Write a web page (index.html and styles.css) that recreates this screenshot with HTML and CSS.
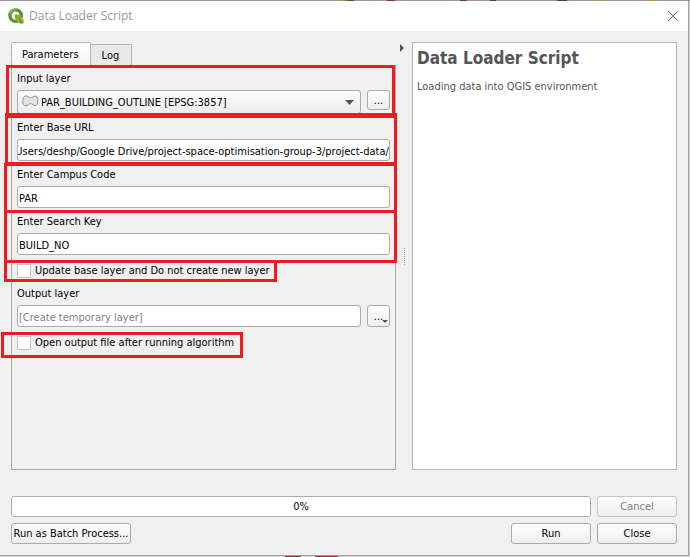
FILE: index.html
```html
<!DOCTYPE html>
<html lang="en">
<head>
<meta charset="utf-8">
<title>Data Loader Script</title>
<link rel="stylesheet" href="styles.css">
</head>
<body>
<div class="backdrop backdrop-top" aria-hidden="true">
  <svg width="690" height="1" shape-rendering="crispEdges">
    <path d="M342 0h4v1h-4z" fill="#a8901c"/><path d="M346 0h3v1h-3z" fill="#2c8058"/><path d="M349 0h5v1h-5z" fill="#9a2c30"/>
    <path d="M387 0h8v1h-8zM460 0h7v1h-7z" fill="#843038"/><path d="M490 0h6v1h-6zM557 0h10v1h-10z" fill="#3c4654"/>
    <path d="M590 0h4v1h-4zM597 0h4v1h-4zM650 0h7v1h-7z" fill="#b89a20"/>
  </svg>
</div>
<main class="dialog">
  <header class="titlebar">
    <svg class="logo" width="16" height="16" viewBox="0 0 16 16">
      <circle cx="7.6" cy="7.6" r="5.7" fill="none" stroke="#589632" stroke-width="3.4"/>
      <path d="M2.2 5.6A5.8 5.8 0 0 1 7.6 1.8" fill="none" stroke="#8cba3c" stroke-width="1.6"/>
      <path d="M8 8l7 7" stroke="#fff" stroke-width="5"/>
      <path d="M7 7h4l4.600 4.800V15.500H12.200L7 10.500z" fill="#93b023"/>
      <path d="M6.500 6.500h4L9 8.500 7 10.300z" fill="#ee7913"/>
      <path d="M10.500 10.500l4.500 4.700h-3z" fill="#589632"/>
    </svg>
    <h1 class="title">Data Loader Script</h1>
    <button class="close" type="button" aria-label="Close window">
      <svg width="12" height="12" viewBox="0 0 12 12"><path d="M1 1l10 10M11 1L1 11" stroke="#777" stroke-width="1" fill="none"/></svg>
    </button>
  </header>
  <form class="body">
    <div class="columns">
      <section class="left">
        <div class="tabs" role="tablist">
          <button class="tab tab-active" type="button" role="tab" aria-selected="true">Parameters</button>
          <button class="tab" type="button" role="tab" aria-selected="false">Log</button>
        </div>
        <div class="panel" role="tabpanel">
          <div class="field mark mark-layer">
            <label for="input-layer">Input layer</label>
            <div class="row">
              <div class="combo">
                <svg class="polygon" width="17" height="12" viewBox="0 0 17 12"><path d="M3.500 1C5.500.5 6.500 2.600 8.500 2.600S11.500 1 13.500 1.200C16 1.500 16 4 15.800 6c-.2 3-1 4.500-2.800 4.500-2 0-2.500-1.800-4.500-1.800S6 10.800 3.800 10.800C1.500 10.800.8 9 .8 6 .8 3.500 1.300 1.400 3.500 1z" fill="#e2e2e2" stroke="#929292"/></svg>
                <select id="input-layer"><option>PAR_BUILDING_OUTLINE [EPSG:3857]</option></select>
                <svg class="arrow" width="9" height="5" viewBox="0 0 9 5"><path d="M0 0h9L4.500 5z" fill="#555"/></svg>
              </div>
              <button class="button browse browse-short" type="button" aria-label="Browse input layer">...</button>
            </div>
          </div>
          <div class="field mark mark-url">
            <label for="base-url">Enter Base URL</label>
            <input class="text text-scrolled" id="base-url" type="text" value="/Users/deshp/Google Drive/project-space-optimisation-group-3/project-data/">
          </div>
          <div class="field mark mark-campus">
            <label for="campus">Enter Campus Code</label>
            <input class="text" id="campus" type="text" value="PAR">
          </div>
          <div class="field mark mark-key">
            <label for="search-key">Enter Search Key</label>
            <input class="text" id="search-key" type="text" value="BUILD_NO">
          </div>
          <div class="check mark mark-update">
            <input id="update" type="checkbox"><label for="update">Update base layer and Do not create new layer</label>
          </div>
          <div class="field">
            <label for="output">Output layer</label>
            <div class="row">
              <input class="text" id="output" type="text" placeholder="[Create temporary layer]">
              <button class="button browse" type="button" aria-label="Choose output">...<svg class="menu-arrow" width="6" height="3" viewBox="0 0 6 3"><path d="M0 0h6L3 3z" fill="#555"/></svg></button>
            </div>
          </div>
          <div class="check mark mark-open">
            <input id="open" type="checkbox"><label for="open">Open output file after running algorithm</label>
          </div>
        </div>
      </section>
      <div class="splitter">
        <svg class="collapse" width="4" height="8" viewBox="0 0 4 8"><path d="M0 0v8l4-4z" fill="#555"/></svg>
        <span class="grip"></span>
      </div>
      <section class="help">
        <h2>Data Loader Script</h2>
        <p>Loading data into QGIS environment</p>
      </section>
    </div>
    <footer class="footer">
      <div class="row">
        <div class="progress">
          <progress id="progress" value="0" max="100"></progress>
          <label for="progress">0%</label>
        </div>
        <button class="button action" type="button" disabled>Cancel</button>
      </div>
      <div class="row">
        <button class="button batch" type="button">Run as Batch Process...</button>
        <button class="button action" type="button">Run</button>
        <button class="button action" type="button">Close</button>
      </div>
    </footer>
  </form>
</main>
<div class="backdrop" aria-hidden="true">
  <svg width="690" height="1" shape-rendering="crispEdges"><path d="M285 0h16v1h-16zM315 0h23v1h-23z" fill="#a03034"/></svg>
</div>
<script src="main.js"></script>
</body>
</html>
```
FILE: main.js
```js
// Long paths show their end, as after typing.
const url = document.getElementById("base-url");
url.scrollLeft = url.scrollWidth;
```
FILE: styles.css
```css
*, *::after { box-sizing: border-box; }

body {
  margin: 0;
  min-height: 100vh;
  display: flex;
  flex-direction: column;
  background: #d4d4d4;
  color: #000;
  font: 11px/16px "DejaVu Sans Condensed", "Noto Sans", sans-serif;
}

button, input, select { font: inherit; color: inherit; margin: 0; }

.backdrop { height: 1px; overflow: hidden; }
.backdrop svg { display: block; }
.backdrop-top { background: #999; }

.dialog {
  flex: 1;
  display: flex;
  flex-direction: column;
  margin-right: 1px;
  border-right: 1px solid #a0a0a0;
  border-bottom: 1px solid #a0a0a0;
  background: #f0f0f0;
}

.titlebar {
  display: flex;
  align-items: center;
  gap: 5px;
  height: 30px;
  padding: 0 9px 0 8px;
  background: #fff;
}
.title {
  flex: 1;
  margin: 0;
  font: 12px/16px "Open Sans", "Noto Sans", sans-serif;
  color: #999;
}
.close { display: flex; padding: 0; border: 0; background: none; }

.body {
  flex: 1;
  display: flex;
  flex-direction: column;
  gap: 26px;
  padding: 11px;
}
.columns {
  flex: 1;
  display: grid;
  grid-template-columns: minmax(0, 385fr) 16px minmax(0, 265fr);
}

.left { display: flex; flex-direction: column; }
.tabs { display: flex; align-items: flex-end; }
.tab {
  height: 21px;
  padding: 2px 12px 0 11px;
  border: 1px solid #b4b4b4;
  border-left: 0;
  border-bottom: 0;
  border-radius: 0 2px 0 0;
  background: #e9e9e9;
}
.tab-active {
  height: 23px;
  padding: 2px 11px 0 10px;
  border-left: 1px solid #b4b4b4;
  border-radius: 2px 2px 0 0;
  background: linear-gradient(#fff, #f4f4f4);
}

.panel {
  flex: 1;
  display: flex;
  flex-direction: column;
  gap: 6px;
  padding: 5px;
  border: 1px solid #a9a9a9;
}
.field { display: flex; flex-direction: column; gap: 3px; }
.row { display: flex; gap: 6px; }

.text {
  flex: 1 0 auto;
  min-width: 0;
  width: 100%;
  height: 22px;
  padding: 2px 1px 0;
  border: 1px solid #ababab;
  border-radius: 3px;
  background: #fff;
}
.row .text { flex: 1; width: 0; }
.text-scrolled { padding: 2px 0 0; }
.text::placeholder { color: #808080; opacity: 1; }

.combo { position: relative; flex: 1; display: flex; }
.combo select {
  width: 100%;
  height: 24px;
  padding: 2px 20px 0 23px;
  appearance: none;
  border: 1px solid #ababab;
  border-radius: 3px;
  background: linear-gradient(#fdfdfd, #ececec);
}
.polygon { position: absolute; left: 5px; top: 5px; }
.arrow { position: absolute; right: 7px; top: 10px; }

.button {
  position: relative;
  height: 21px;
  padding: 0;
  border: 1px solid #ababab;
  border-radius: 3px;
  background: linear-gradient(#fff, #ededed);
  white-space: nowrap;
}
.button:disabled { color: #808080; border-color: #c4c4c4; }
.browse { width: 23px; height: 22px; padding-top: 2px; }
.browse-short { height: 20px; }
.menu-arrow { position: absolute; right: 1px; bottom: 3px; }
.action { width: 80px; }
.batch { width: 120px; margin-right: auto; }

.check { display: flex; align-items: center; gap: 4px; height: 19px; }
.check input {
  appearance: none;
  width: 14px;
  height: 14px;
  border: 1px solid #c4c4c4;
  background: #fff;
}

/* Red highlight frames drawn over the form */
.mark { position: relative; }
.mark::after {
  content: "";
  position: absolute;
  z-index: 1;
  border: 3px solid #ed1c24;
  pointer-events: none;
}
.mark-layer::after { inset: -6px -5px -3px -11px; }
.mark-url::after { inset: -7px -7px -5px -12px; border-top-width: 5px; border-bottom-width: 4px; }
.mark-campus::after { inset: -4px -7px -5px -13px; }
.mark-key::after { inset: -4px -7px -8px -13px; }
.mark-update::after { top: -1px; bottom: -2px; left: -13px; width: 273px; }
.mark-open::after { top: -1px; bottom: -6px; left: -16px; width: 242px; }

.splitter {
  position: relative;
  display: flex;
  align-items: center;
  justify-content: center;
}
.collapse { position: absolute; left: 4px; top: 2px; }
.grip { height: 17px; border-left: 1px dotted #a0a0a0; }

.help {
  padding: 4px;
  border: 1px solid #b4b4b4;
  background: #fff;
  color: #555;
}
.help h2 { margin: 0 0 10px; font: bold 17px/22px "DejaVu Sans Condensed", "Noto Sans", sans-serif; }
.help p { margin: 0; }

.footer { display: flex; flex-direction: column; gap: 6px; }
.progress {
  position: relative;
  flex: 1;
  height: 21px;
  border: 1px solid #ababab;
  border-radius: 3px;
  background: #fff;
  overflow: hidden;
}
.progress progress { display: block; width: 100%; height: 100%; appearance: none; border: 0; }
.progress progress::-webkit-progress-bar { background: #fff; }
.progress label { position: absolute; inset: 0; line-height: 20px; text-align: center; }
```
